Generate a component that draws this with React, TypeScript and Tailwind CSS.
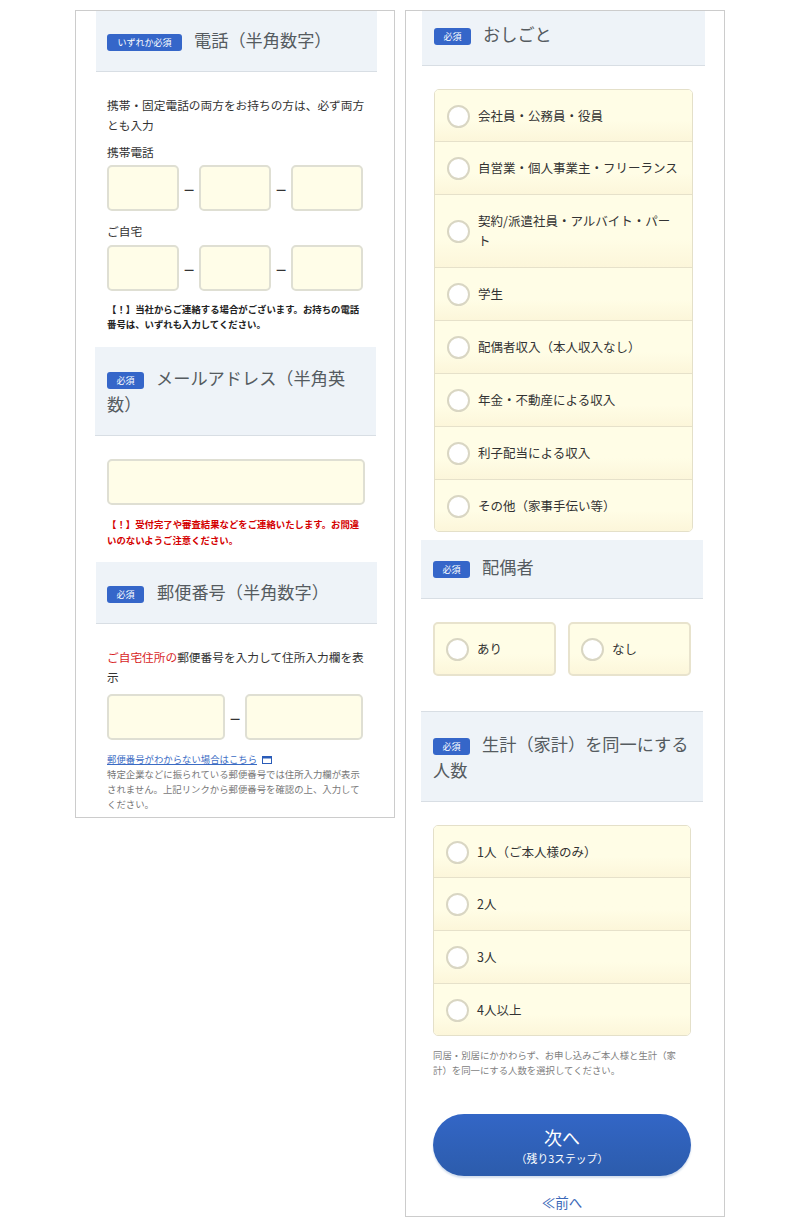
import type { ReactNode } from 'react'

const FONT = "font-['Noto_Sans_CJK_JP','Noto_Sans',sans-serif]"

function Badge({ label, wide }: { label: string; wide?: boolean }) {
	return (
		<span
			className={`inline-flex items-center justify-center align-[1px] mr-[12px] h-[17px] rounded-[3px] bg-[#3566c9] text-[9px] leading-none text-white ${
				wide ? 'w-[75px]' : 'w-[37px]'
			}`}
		>
			{label}
		</span>
	)
}

function SectionHeader({
	badge,
	title,
	wide,
	className,
}: {
	badge: string
	title: string
	wide?: boolean
	className: string
}) {
	return (
		<div
			className={`bg-[#eef3f8] border-b border-[#d8dee4] pr-[12px] text-[17.2px] leading-[26px] text-[#555b60] ${className}`}
		>
			<Badge label={badge} wide={wide} />
			{title}
		</div>
	)
}

function Field({ className }: { className: string }) {
	return (
		<input
			type="text"
			aria-label="入力"
			className={`h-[46px] rounded-[5px] border-2 border-[#dfdfd3] bg-[#fffde8] ${className}`}
		/>
	)
}

function Dash() {
	return <span className="w-[20px] text-center text-[20px] leading-none text-[#333]">–</span>
}

function PhoneRow() {
	return (
		<div className="flex items-center">
			<Field className="w-[72px]" />
			<Dash />
			<Field className="w-[72px]" />
			<Dash />
			<Field className="w-[72px]" />
		</div>
	)
}

function Radio({ label }: { label: ReactNode }) {
	return (
		<>
			<span className="w-[23px] h-[23px] -my-[2px] shrink-0 rounded-full border-2 border-[#d9d6c3] bg-white" />
			<span className="ml-[8px] text-[12.5px] leading-[20px] text-[#333]">{label}</span>
		</>
	)
}

function RadioList({ items, className }: { items: string[]; className: string }) {
	return (
		<div className={`rounded-[5px] border border-[#e4e0c9] overflow-hidden ${className}`}>
			{items.map((item) => (
				<div
					key={item}
					className="flex items-center pl-[12px] pr-[10px] py-[16px] first:pb-[15px] last:pb-[15px] border-b border-[#e6e1ca] last:border-b-0 bg-gradient-to-b from-[#fffde6] from-60% to-[#fcf6da]"
				>
					<Radio label={item} />
				</div>
			))}
		</div>
	)
}

function YesNo({ label }: { label: string }) {
	return (
		<div className="flex items-center w-[123px] h-[54px] pl-[11px] rounded-[5px] border-2 border-[#e8e3cd] bg-gradient-to-b from-[#fffde6] from-60% to-[#fcf6da]">
			<Radio label={label} />
		</div>
	)
}

export default function App() {
	return (
		<div className={`${FONT} flex items-start gap-[10px] pl-[75px] pt-[10px] h-[1231px] bg-white`}>
			{/* left column */}
			<div className="w-[320px] h-[808px] border border-[#cccccc] overflow-hidden pl-[20px]">
				<SectionHeader badge="いずれか必須" title="電話（半角数字）" wide className="w-[281px] pl-[11px] pt-[16px] pb-[18px]" />

				<div className="pl-[11px] w-[281px]">
					<p className="mt-[23px] w-[262px] text-[11.7px] leading-[20px] text-[#333]">
						携帯・固定電話の両方をお持ちの方は、必ず両方とも入力
					</p>
					<p className="mt-[7px] mb-[3px] text-[11.7px] leading-[20px] text-[#333]">携帯電話</p>
					<PhoneRow />
					<p className="mt-[10px] mb-[4px] text-[11.7px] leading-[20px] text-[#333]">ご自宅</p>
					<PhoneRow />
					<p className="mt-[11px] w-[258px] text-[9.4px] leading-[15px] font-bold text-[#222]">
						【！】当社からご連絡する場合がございます。お持ちの電話番号は、いずれも入力してください。
					</p>
				</div>

				<SectionHeader badge="必須" title="メールアドレス（半角英数）" className="w-[281px] -ml-[1px] pl-[12px] mt-[15px] pt-[18px] pb-[18px]" />

				<div className="pl-[11px] w-[281px]">
					<Field className="block mt-[23px] w-[258px]" />
					<p className="mt-[11px] w-[258px] text-[9.4px] leading-[16px] font-bold text-[#d40000]">
						【！】受付完了や審査結果などをご連絡いたします。お間違いのないようご注意ください。
					</p>
				</div>

				<SectionHeader badge="必須" title="郵便番号（半角数字）" className="w-[281px] pl-[11px] mt-[14px] pt-[17px] pb-[18px] [&>span]:mr-[13px]" />

				<div className="pl-[11px] w-[281px]">
					<p className="mt-[23px] w-[260px] text-[11.7px] leading-[20px] text-[#333]">
						<span className="text-[#d81e1e]">ご自宅住所の</span>郵便番号を入力して住所入力欄を表示
					</p>
					<div className="mt-[7px] flex items-center">
						<Field className="w-[118px]" />
						<Dash />
						<Field className="w-[118px]" />
					</div>
					<p className="mt-[12px] text-[9.4px] leading-[15px]">
						<a href="#" className="text-[#3b6cc4] underline">郵便番号がわからない場合はこちら</a>
						<svg width="10" height="8" viewBox="0 0 10 8" className="inline-block ml-[5px] align-[-1px]">
							<rect x="0.5" y="0.5" width="9" height="7" fill="#fff" stroke="#2a5cb8" />
							<rect x="0" y="0" width="10" height="2.5" fill="#2a5cb8" />
						</svg>
					</p>
					<p className="w-[256px] text-[9.4px] leading-[15px] text-[#777]">
						特定企業などに振られている郵便番号では住所入力欄が表示されません。上記リンクから郵便番号を確認の上、入力してください。
					</p>
				</div>
			</div>

			{/* right column */}
			<div className="w-[320px] h-[1207px] border border-[#cccccc] overflow-hidden pl-[15px]">
				<div className="ml-[1px] w-[283px]">
					<SectionHeader badge="必須" title="おしごと" className="pl-[12px] pt-[10px] pb-[18px]" />
				</div>

				<RadioList
					className="ml-[13px] mt-[23px] w-[259px]"
					items={[
						'会社員・公務員・役員',
						'自営業・個人事業主・フリーランス',
						'契約/派遣社員・アルバイト・パート',
						'学生',
						'配偶者収入（本人収入なし）',
						'年金・不動産による収入',
						'利子配当による収入',
						'その他（家事手伝い等）',
					]}
				/>

				<SectionHeader badge="必須" title="配偶者" className="mt-[8px] w-[282px] pl-[12px] pt-[14px] pb-[18px]" />

				<div className="mt-[23px] ml-[12px] flex gap-[12px]">
					<YesNo label="あり" />
					<YesNo label="なし" />
				</div>

				<SectionHeader
					badge="必須"
					title="生計（家計）を同一にする人数"
					className="mt-[35px] w-[282px] pl-[12px] pt-[19px] pb-[18px] border-t"
				/>

				<div className="ml-[12px] w-[258px]">
					<RadioList
						className="mt-[23px] w-[258px]"
						items={['1人（ご本人様のみ）', '2人', '3人', '4人以上']}
					/>
					<p className="mt-[12px] w-[250px] text-[9.4px] leading-[15px] text-[#808080]">
						同居・別居にかかわらず、お申し込みご本人様と生計（家計）を同一にする人数を選択してください。
					</p>
					<button
						type="button"
						className="mt-[36px] flex flex-col items-center justify-center w-[258px] h-[62px] rounded-full bg-gradient-to-b from-[#3366c6] to-[#2c5cac] text-white shadow-[0_2px_2px_#d4dfee]"
					>
						<span className="text-[18px] leading-[24px]">次へ</span>
						<span className="mt-[2px] text-[10.8px] leading-[15px]">（残り3ステップ）</span>
					</button>
					<p className="mt-[16px] text-center text-[13.5px] leading-[20px] text-[#3b68b8]">≪前へ</p>
				</div>
			</div>
		</div>
	)
}
